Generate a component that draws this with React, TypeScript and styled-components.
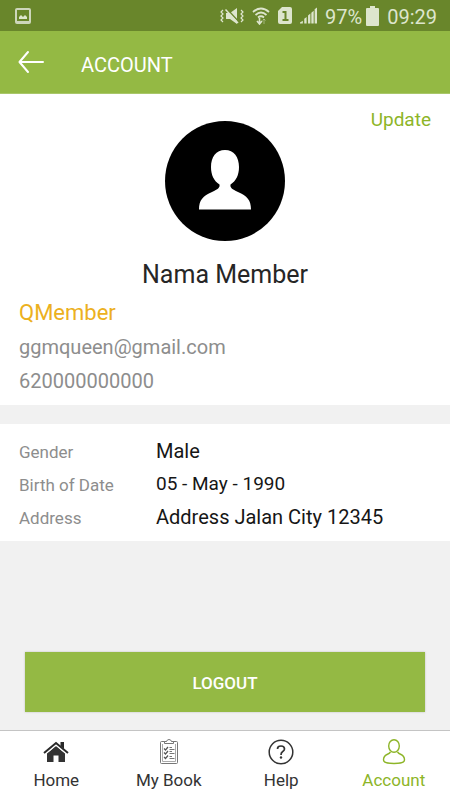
import React from "react";
import styled, { createGlobalStyle } from "styled-components";

const green = "#94b944";
const accent = "#8db528";

const GlobalStyle = createGlobalStyle`
  * { box-sizing: border-box; }
  html, body, #root { height: 100%; }
  body {
    margin: 0;
    background: #f1f1f1;
    color: #262626;
    font-family: Roboto, "Liberation Sans", sans-serif;
  }
  svg { display: block; flex: none; }
`;

const Screen = styled.div`
  min-height: 100vh;
  display: flex;
  flex-direction: column;
`;

const StatusBar = styled.div`
  height: 31px;
  display: flex;
  align-items: center;
  justify-content: space-between;
  padding: 0 13px 0 15px;
  background: #69862b;
  color: #dde5cd;
  font-size: 20px;
  line-height: 30px;
`;

const StatusIcons = styled.div`
  display: flex;
  align-items: center;
`;

const StatusGroup = styled.div`
  display: flex;
  align-items: center;
  gap: 8px;
  margin-right: 8px;
`;

const StatusText = styled.span`
  padding-top: 2px;
`;

const Charge = styled(StatusText)`
  margin-right: 4px;
`;

const Clock = styled(StatusText)`
  margin-left: 8px;
`;

const Header = styled.header`
  height: 63px;
  display: flex;
  align-items: center;
  gap: 37px;
  padding: 0 18px;
  background: ${green};
  border-bottom: 1px solid #a9c76a;
  color: #fff;
`;

const BackButton = styled.button`
  padding: 0;
  border: 0;
  background: none;
  color: inherit;
  cursor: pointer;
`;

const Title = styled.h1`
  margin: 0;
  padding-top: 5px;
  font-size: 20px;
  line-height: 24px;
  font-weight: 400;
`;

const Profile = styled.section`
  display: flex;
  flex-direction: column;
  padding: 14px 19px 8px;
  background: #fff;
`;

const UpdateLink = styled.a`
  align-self: flex-end;
  font-size: 19px;
  line-height: 24px;
  color: ${accent};
  text-decoration: none;
`;

const Avatar = styled.div`
  align-self: center;
  width: 120px;
  height: 120px;
  margin-top: -11px;
  border-radius: 50%;
  background: #000;
`;

const Name = styled.h2`
  margin: 18px 0 0;
  font-size: 25px;
  line-height: 32px;
  font-weight: 400;
  text-align: center;
`;

const Level = styled.p`
  margin: 6px 0 0;
  font-size: 22px;
  line-height: 32px;
  color: #ecb020;
`;

const Contact = styled.p`
  margin: 2px 0 0;
  font-size: 20px;
  line-height: 32px;
  color: #8d8d8d;
`;

const Details = styled.dl`
  display: grid;
  grid-template-columns: 137px 1fr;
  row-gap: 1px;
  margin: 19px 0 0;
  padding: 11px 19px 8px;
  background: #fff;
`;

const Term = styled.dt`
  padding-top: 2px;
  font-size: 17px;
  line-height: 30px;
  color: #8d8d8d;
`;

const Value = styled.dd<{ $size?: number }>`
  margin: 0;
  font-size: ${(p) => p.$size ?? 20}px;
  line-height: 32px;
  color: #161616;
`;

const Actions = styled.div`
  margin-top: auto;
  padding: 0 25px 18px;
`;

const LogoutButton = styled.button`
  display: block;
  width: 100%;
  height: 60px;
  padding: 2px 0 0;
  border: 0;
  background: ${green};
  box-shadow: 0 0 2px rgba(0, 0, 0, 0.2);
  color: #fff;
  font-family: inherit;
  font-size: 17px;
  font-weight: 500;
  cursor: pointer;
`;

const TabBar = styled.nav`
  height: 70px;
  display: grid;
  grid-template-columns: repeat(4, 1fr);
  background: #fff;
  border-top: 1px solid #c4c4c4;
`;

const Tab = styled.a<{ $active?: boolean }>`
  display: flex;
  flex-direction: column;
  align-items: center;
  gap: 2px;
  padding-top: 7px;
  color: ${(p) => (p.$active ? accent : "#333")};
  font-size: 17px;
  line-height: 24px;
  text-decoration: none;
`;

const PictureIcon = () => (
  <svg width="16" height="16" viewBox="0 0 16 16">
    <path
      fill="#cdd6bb"
      fillRule="evenodd"
      d="M2 0H14Q16 0 16 2V14Q16 16 14 16H2Q0 16 0 14V2Q0 0 2 0ZM2 2V13H14V2Z"
    />
    <path fill="#dde5cd" d="M4 11V9L6 7L8 9L10 7L12 9V11Z" />
  </svg>
);

const MuteIcon = () => (
  <svg width="24" height="18" viewBox="0 0 24 18" fill="none" stroke="#dde5cd">
    <path d="M6 6H10L17 1V17L10 12H6Z" fill="#dde5cd" stroke="none" />
    <path d="M6.500 1.500L19 15" stroke="#69862b" strokeWidth="1.500" />
    <path d="M5.500 2.500L18 16" strokeWidth="1.500" />
    <path d="M3 3L1 5L3 7L1 9L3 11L1 13L3 15M21 3L23 5L21 7L23 9L21 11L23 13L21 15" strokeWidth="1.200" />
  </svg>
);

const WifiIcon = () => (
  <svg width="18" height="18" viewBox="0 0 18 18" fill="none" stroke="#dde5cd" strokeWidth="1.800">
    <path d="M1 5Q9 -2 17 5M3.500 8Q9 3 14.500 8M6 10.500Q9 8 12 10.500" />
    <path d="M7.500 11V16M5 14L7.500 17L10 14" strokeWidth="1.600" />
    <path d="M12 17V12M10.500 13.500L12 12L13.500 13.500" strokeWidth="1" opacity="0.500" />
  </svg>
);

const SimIcon = () => (
  <svg width="14" height="17" viewBox="0 0 14 17">
    <path fill="#dde5cd" d="M4 0H12Q14 0 14 2V15Q14 17 12 17H2Q0 17 0 15V4Z" />
    <path fill="none" stroke="#69862b" strokeWidth="2" d="M4.500 5H7.500V13M4.500 13H10.500" />
  </svg>
);

const SignalIcon = () => (
  <svg width="17" height="17" viewBox="0 0 18 17" fill="#dde5cd">
    <path d="M0 17V16L3 14V17ZM4.500 12L7 10V17H4.500ZM8.500 8.500L11 6.500V17H8.500ZM12 5.500L14.500 3.500V17H12ZM15.500 2L18 0V17H15.500Z" />
  </svg>
);

const BatteryIcon = () => (
  <svg width="13" height="20" viewBox="0 0 13 20" fill="#dde5cd">
    <path d="M4 0H9V2H12Q13 2 13 3V19Q13 20 12 20H1Q0 20 0 19V3Q0 2 1 2H4Z" />
  </svg>
);

const ArrowIcon = () => (
  <svg width="26" height="24" viewBox="0 0 26 24" fill="none" stroke="currentColor" strokeWidth="2" strokeLinecap="round" strokeLinejoin="round">
    <path d="M10 2L1.500 12L10 22M2 12H25" />
  </svg>
);

const AvatarIcon = () => (
  <svg width="120" height="120" viewBox="0 0 120 120" fill="#fff">
    <path d="M60 29C69 29 74 36 74 46C74 54 71 60 65.500 63.500C65 67 67 68 73 71C82 75 86 79 86 88.500H34C34 79 38 75 47 71C53 68 55 67 54.500 63.500C49 60 46 54 46 46C46 36 51 29 60 29Z" />
  </svg>
);

const HomeIcon = () => (
  <svg width="26" height="28" viewBox="0 0 26 28">
    <path fill="#333" d="M4 15.500L13 8L22 15.500V24H15.500V17.500H10.500V24H4Z" />
    <path fill="#292929" d="M17.500 4H21V11L17.500 8Z" />
    <path fill="none" stroke="#fff" strokeWidth="1" d="M2 16.500L13 7.300L24 16.500" />
    <path fill="none" stroke="#292929" strokeWidth="2" d="M1 15L13 5L25 15" />
  </svg>
);

const ClipboardIcon = () => (
  <svg width="20" height="28" viewBox="0 0 20 28" fill="none" stroke="#777" strokeWidth="1">
    <rect x="1.500" y="3.500" width="17" height="22" rx="1" />
    <path stroke="#aaa" d="M3.500 6V23.500H16.500V6" />
    <path fill="#fff" d="M5.500 5.500V3.500H7.500Q8 1.500 10 1.500T12.500 3.500H14.500V5.500Z" />
    <path strokeWidth="1.200" stroke="#555" d="M5 10.500L6.500 12L9 9M5 14.500L6.500 16L9 13M5 19L6.500 20.500L9 17.500" />
    <path d="M10.500 9.500H13M10.500 11.500H15.500M10.500 13.500H13M10.500 15.500H15.500M10.500 18.500H13M10.500 20.500H15.500" />
  </svg>
);

const HelpIcon = () => (
  <svg width="26" height="28" viewBox="0 0 26 28" fill="none" stroke="#333" strokeWidth="1.500">
    <circle cx="13" cy="14" r="11.800" />
    <path strokeWidth="1.700" d="M9.500 11Q9.500 8 13 8T16.500 11Q16.500 12.500 14.500 13.800Q13 14.800 13 17" />
    <circle cx="13" cy="19.500" r="1.200" fill="#333" stroke="none" />
  </svg>
);

const UserIcon = () => (
  <svg width="24" height="28" viewBox="0 0 24 28" fill="none" stroke="currentColor" strokeWidth="1.400">
    <ellipse cx="12" cy="8" rx="5.300" ry="6.300" />
    <path d="M8.500 14Q7.500 15.500 5 16.500Q1.500 18 1.500 22Q1.500 25.500 12 25.500T22.500 22Q22.500 18 19 16.500Q16.500 15.500 15.500 14" />
  </svg>
);

const contacts = ["ggmqueen@gmail.com", "620000000000"];

const details = [
  { label: "Gender", value: "Male", size: 20 },
  { label: "Birth of Date", value: "05 - May - 1990", size: 19 },
  { label: "Address", value: "Address Jalan City 12345", size: 20 },
];

const tabs = [
  { label: "Home", Icon: HomeIcon },
  { label: "My Book", Icon: ClipboardIcon },
  { label: "Help", Icon: HelpIcon },
  { label: "Account", Icon: UserIcon, active: true },
];

export default function App() {
  return (
    <>
      <GlobalStyle />
      <Screen>
        <StatusBar>
          <PictureIcon />
          <StatusIcons>
            <StatusGroup>
              <MuteIcon />
              <WifiIcon />
              <SimIcon />
              <SignalIcon />
            </StatusGroup>
            <Charge>97%</Charge>
            <BatteryIcon />
            <Clock>09:29</Clock>
          </StatusIcons>
        </StatusBar>
        <Header>
          <BackButton type="button" aria-label="Back">
            <ArrowIcon />
          </BackButton>
          <Title>ACCOUNT</Title>
        </Header>
        <Profile>
          <UpdateLink href="#update">Update</UpdateLink>
          <Avatar>
            <AvatarIcon />
          </Avatar>
          <Name>Nama Member</Name>
          <Level>QMember</Level>
          {contacts.map((text) => (
            <Contact key={text}>{text}</Contact>
          ))}
        </Profile>
        <Details>
          {details.map(({ label, value, size }) => (
            <React.Fragment key={label}>
              <Term>{label}</Term>
              <Value $size={size}>{value}</Value>
            </React.Fragment>
          ))}
        </Details>
        <Actions>
          <LogoutButton type="button">LOGOUT</LogoutButton>
        </Actions>
        <TabBar>
          {tabs.map(({ label, Icon, active }) => (
            <Tab key={label} href={`#${label}`} $active={active} aria-current={active ? "page" : undefined}>
              <Icon />
              {label}
            </Tab>
          ))}
        </TabBar>
      </Screen>
    </>
  );
}
